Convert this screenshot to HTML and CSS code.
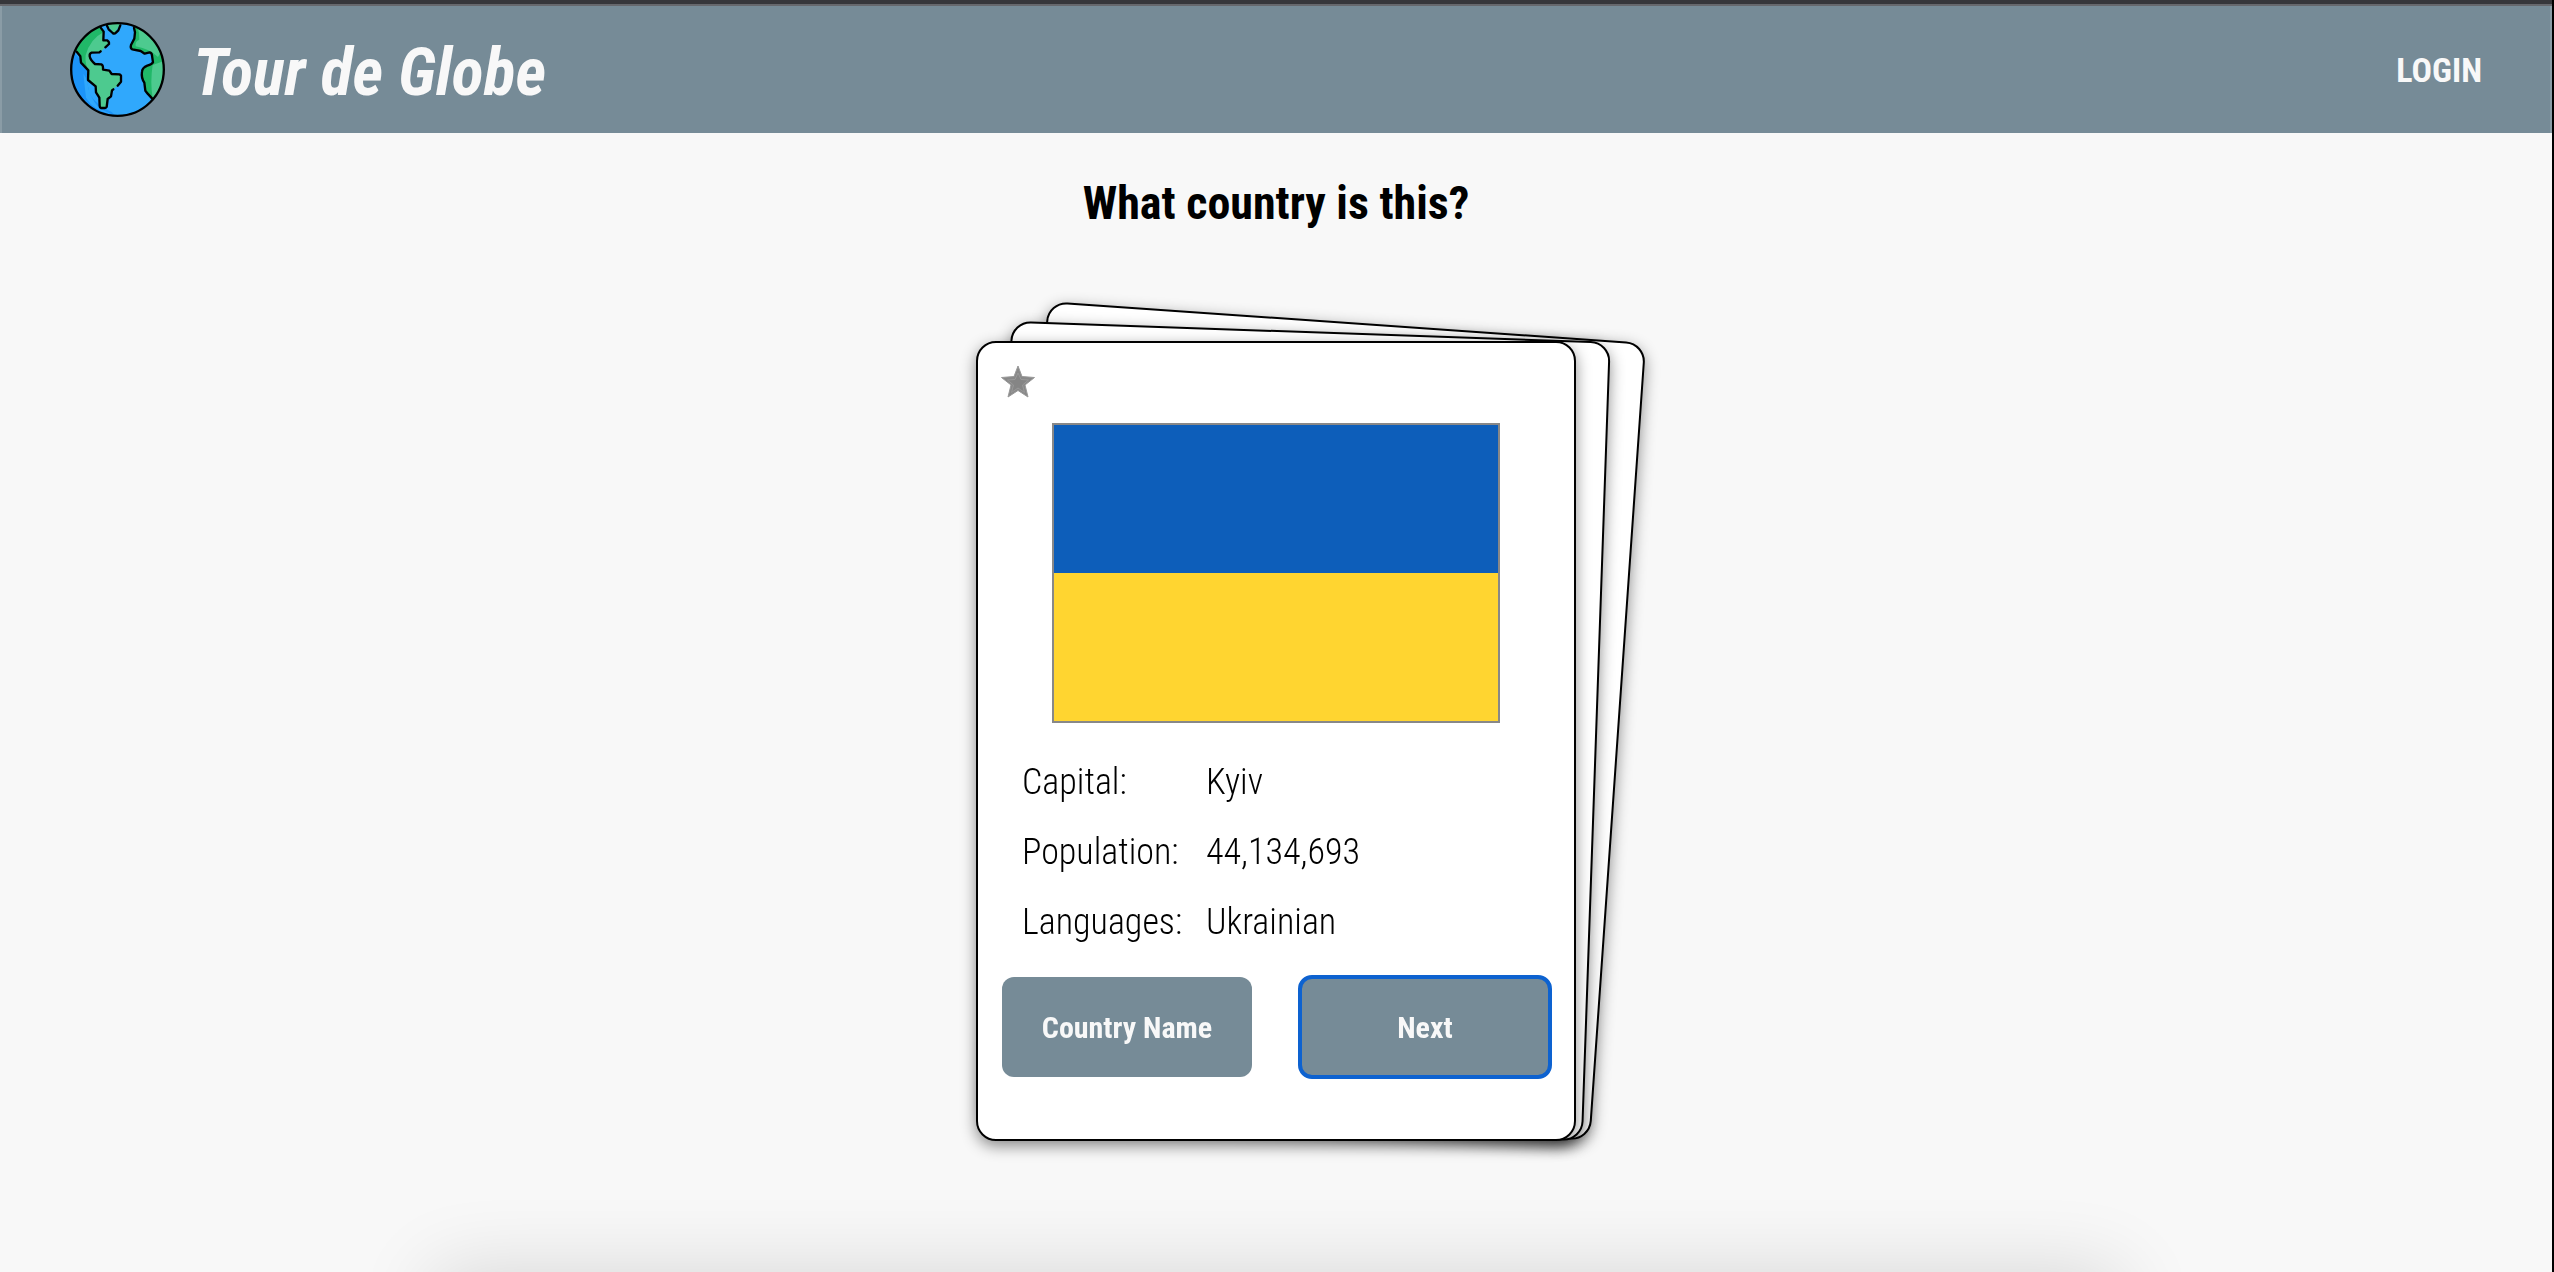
FILE: index.html
```html
<!DOCTYPE html>
<html lang="en">
<head>
  <meta charset="utf-8">
  <meta name="viewport" content="width=device-width, initial-scale=1">
  <title>Tour de Globe</title>
  <link rel="stylesheet" href="styles.css">
</head>
<body>
  <header class="topbar">
    <a class="brand" href="#">
      <svg class="brand-globe" viewBox="60 35 285 285" aria-hidden="true">
        <defs>
          <clipPath id="sphere"><circle cx="202.500" cy="177.500" r="139"/></clipPath>
        </defs>
        <g clip-path="url(#sphere)">
          <rect x="60" y="35" width="285" height="285" fill="#30a8fc"/>
          <path d="M60 110L88 145L113 175L110 205L118 250Q140 285 185 305L200 320H60Z" fill="#1c94f8"/>
          <path d="M100 190L112 210Q112 255 150 296L185 312Q130 300 108 262Z" fill="#30a8fc"/>
          <path d="M152 50L161 64L160 90L175 93L177 101L165 112L152 124L125 126L118 133L120 145L135 161L157 162L160 177L180 181L185 190L212 192L213 214L198 230L186 238L183 258L173 266L170 292L150 293L148 260L138 246L137 226L113 207L113 176L92 157L90 138L78 122L80 40Z" fill="#4dca8f"/>
          <path d="M152 50L160 66Q120 86 107 135Q104 160 118 190L113 207L113 176L92 157L90 138L78 122V60Z" fill="#20b868"/>
          <path d="M170 40L192 70L212 40Z" fill="#4dca8f"/>
          <path d="M253 48L253 85L242 104L247 119L272 123L284 132L305 127L310 158L288 170L275 184L276 204L284 219L289 246L308 264L350 240V40Z" fill="#4dca8f"/>
          <path d="M253 48L253 85L242 104L247 119L272 123L284 132L305 127L310 158L288 170L275 184L276 204L284 219L289 246L308 264Q300 215 308 164L342 152L335 120L324 140Q300 116 257 108Q255 92 268 88Q270 70 262 50Z" fill="#20b868"/>
        </g>
        <g fill="none" stroke="#000" stroke-width="7" stroke-linecap="round" stroke-linejoin="round">
          <path d="M152 52L161 64L160 90L171 90Q178 94 177 101L166 111M152 123L148 126L125 127Q118 129 119 138Q121 149 135 161L154 162Q160 164 159 178L178 181L185 191L209 192L213 196V214L203 226M190 237L186 240L183 258L173 266L170 290Q169 293 165 293H153Q149 292 149 287L148 262L138 246L137 228L114 209L115 180L93 157L91 138L80 124"/>
          <path d="M171 46L176 57L188 68Q193 72 198 67L205 60L211 45"/>
          <path d="M252 53L255 66L253 85L243 104Q240 114 247 117L272 122L284 130L299 126Q306 128 306 136L309 156Q306 162 292 166Q277 172 276 184Q273 202 283 217L286 241L293 250L306 264"/>
          <circle cx="202.500" cy="177.500" r="139"/>
        </g>
      </svg>
      <span class="brand-name">Tour de Globe</span>
    </a>
    <nav><a class="login" href="#">LOGIN</a></nav>
  </header>

  <main class="quiz">
    <h1 class="question">What country is this?</h1>
    <div class="deck">
      <article class="card">
        <button class="favorite" type="button" aria-label="Favorite">
          <svg viewBox="1 0 34 34" aria-hidden="true">
            <path d="M17 1L21 11.500L33.500 12.500L24 20L27 32L17 25.500L7 32L10 20L.5 12.500L13 11.500Z" fill="#888" stroke="#999" stroke-width="1" stroke-linejoin="round"/>
            <path d="M17 8L20 14.500L27.500 15L21.500 20L23.500 27.500L17 23L10.500 27.500L12.500 20L6.500 15L14 14.500Z" fill="#858585" stroke="#999" stroke-width="1"/>
          </svg>
        </button>
        <div class="flag" role="img" aria-label="Flag"></div>
        <table class="facts">
          <tr><th scope="row">Capital:</th><td>Kyiv</td></tr>
          <tr><th scope="row">Population:</th><td>44,134,693</td></tr>
          <tr><th scope="row">Languages:</th><td>Ukrainian</td></tr>
        </table>
        <div class="actions">
          <button class="action" type="button">Country Name</button>
          <button class="action action-active" type="button">Next</button>
        </div>
      </article>
    </div>
  </main>
</body>
</html>
```
FILE: styles.css
```css
* {
  box-sizing: border-box;
}

body {
  display: flex;
  flex-direction: column;
  min-height: 100vh;
  margin: 0;
  border-right: 2px solid #000;
  overflow-x: hidden;
  background: #f8f8f8;
  color: #000;
  font-family: "Roboto Condensed", "Open Sans Condensed", Roboto, sans-serif;
}

/* Soft shade rising from the bottom edge of the window */
body::after {
  content: "";
  position: fixed;
  top: 100%;
  left: 17%;
  right: 17%;
  height: 100px;
  box-shadow: 0 0 80px rgba(0, 0, 0, 0.14);
}

.topbar {
  display: flex;
  align-items: center;
  justify-content: space-between;
  margin-top: 6px;
  padding: 16px 68px;
  border: solid #8a9ca6;
  border-width: 0 2px;
  background: #768b97;
  box-shadow: 0 -2px #66686d, 0 -6px #36373b;
}

.brand {
  display: flex;
  align-items: center;
  gap: 28px;
  color: #f8f8f8;
  text-decoration: none;
}

.brand-globe {
  width: 95px;
  height: 95px;
}

.brand-name {
  padding-top: 6px;
  font-size: 66px;
  font-style: italic;
  font-weight: 700;
  line-height: 80px;
}

.login {
  color: #f8f8f8;
  font-size: 34px;
  font-weight: 700;
  text-decoration: none;
}

.quiz {
  display: flex;
  flex-direction: column;
  align-items: center;
  padding: 42px 24px;
}

.question {
  margin: 0 0 110px;
  font-size: 46px;
  font-weight: 700;
  line-height: 56px;
}

.deck {
  position: relative;
  width: 600px;
  max-width: 100%;
}

.deck::before,
.deck::after,
.card {
  border: 2px solid #000;
  border-radius: 20px;
  background: #fff;
  box-shadow: 0 5px 15px rgba(0, 0, 0, 0.45);
}

.deck::before,
.deck::after {
  content: "";
  position: absolute;
  inset: 0;
}

.deck::before {
  transform: translate(43px, -20px) rotate(4deg);
}

.deck::after {
  transform: translate(21px, -10px) rotate(2deg);
}

.card {
  position: relative;
  z-index: 1;
  padding: 22px 24px 62px;
}

.favorite {
  display: block;
  width: 34px;
  height: 34px;
  padding: 0;
  border: 0;
  background: none;
}

.favorite svg {
  display: block;
  overflow: visible;
}

.flag {
  width: 448px;
  max-width: 100%;
  height: 300px;
  margin: 24px auto;
  border: 2px solid #888;
  background: linear-gradient(#0d5eba 50%, #ffd530 50%);
}

.facts {
  margin: 0 20px 20px;
  border-collapse: collapse;
  font-size: 36px;
  line-height: 70px;
}

.facts th,
.facts td {
  padding: 0;
  font-weight: 300;
  text-align: left;
}

.facts th {
  width: 184px;
}

.actions {
  display: flex;
  justify-content: space-between;
}

.action {
  width: 250px;
  height: 100px;
  border: 0;
  border-radius: 12px;
  background: #768b97;
  color: #f8f8f8;
  font: inherit;
  font-size: 30px;
  font-weight: 700;
}

.action-active {
  outline: 4px solid #0d62d0;
  outline-offset: -2px;
}
```
